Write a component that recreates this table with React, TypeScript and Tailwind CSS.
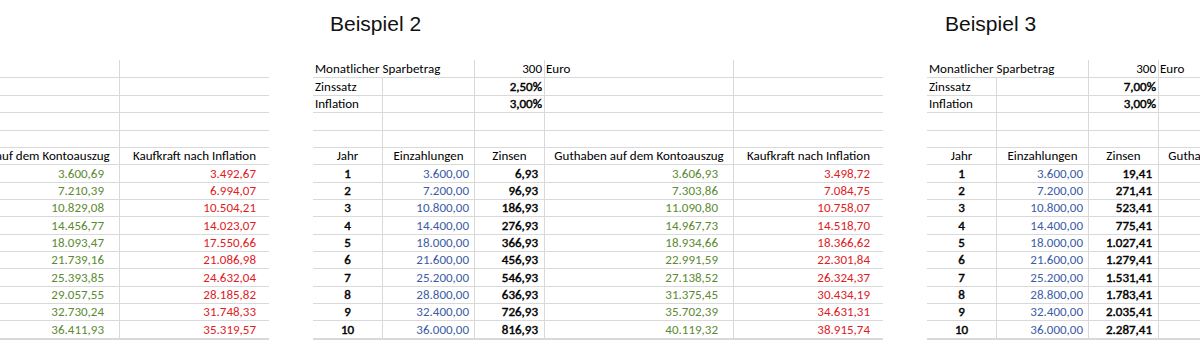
import React from "react";

type Cell = { text?: string; w: string; cls?: string; open?: boolean };

const COLS = ["w-[69px]", "w-[92px]", "w-[70px]", "w-[189px]", "w-[150px]"];

// 16 rows, pixel heights picked so the grid lines fall where Excel drew them
const HEIGHTS = [
  "h-[18px]", "h-[18px]", "h-[17px]", "h-[18px]", "h-[17px]", "h-[17px]",
  "h-[18px]", "h-[17px]", "h-[17px]", "h-[18px]", "h-[17px]", "h-[17px]",
  "h-[18px]", "h-[17px]", "h-[17px]", "h-[19px]",
];

const LEFT = "justify-start pl-[2px]";
const CENTER = "justify-center";
// Excel's bold Calibri reads lighter than the bold face here
const HEAVY = "[-webkit-text-stroke:0.45px_currentColor]";

function fmt(n: number) {
  const [i, d] = n.toFixed(2).split(".");
  return i.replace(/\B(?=(\d{3})+(?!\d))/g, ".") + "," + d;
}

interface Example {
  title: string;
  titleOffset: string;
  rate: string;
  zinsen: number[];
  guthaben: number[];
  kaufkraft: number[];
}

function build(zinsen: number[]) {
  let sum = 0;
  const guthaben = zinsen.map((z) => (sum += 3600 + z));
  return { guthaben, kaufkraft: guthaben.map((g) => g / 1.03093) };
}

const ex3 = build([19.41, 271.41, 523.41, 775.41, 1027.41, 1279.41, 1531.41, 1783.41, 2035.41, 2287.41]);

const examples: Example[] = [
  {
    title: "Beispiel 1",
    titleOffset: "ml-[17px]",
    rate: "0,25%",
    zinsen: [0.69, 10.39, 29.08, 56.77, 93.47, 139.16, 193.85, 257.55, 330.24, 411.93],
    guthaben: [3600.69, 7210.39, 10829.08, 14456.77, 18093.47, 21739.16, 25393.85, 29057.55, 32730.24, 36411.93],
    kaufkraft: [3492.67, 6994.07, 10504.21, 14023.07, 17550.66, 21086.98, 24632.04, 28185.82, 31748.33, 35319.57],
  },
  {
    title: "Beispiel 2",
    titleOffset: "ml-[17px]",
    rate: "2,50%",
    zinsen: [6.93, 96.93, 186.93, 276.93, 366.93, 456.93, 546.93, 636.93, 726.93, 816.93],
    guthaben: [3606.93, 7303.86, 11090.8, 14967.73, 18934.66, 22991.59, 27138.52, 31375.45, 35702.39, 40119.32],
    kaufkraft: [3498.72, 7084.75, 10758.07, 14518.7, 18366.62, 22301.84, 26324.37, 30434.19, 34631.31, 38915.74],
  },
  {
    title: "Beispiel 3",
    titleOffset: "ml-[18px]",
    rate: "7,00%",
    zinsen: [19.41, 271.41, 523.41, 775.41, 1027.41, 1279.41, 1531.41, 1783.41, 2035.41, 2287.41],
    guthaben: ex3.guthaben,
    kaufkraft: ex3.kaufkraft,
  },
];

function Row({ cells, h, last }: { cells: Cell[]; h: string; last?: boolean }) {
  return (
    <div className={`flex ${h} ${last ? "border-b-2" : "border-b"} border-[#d9d9d9]`}>
      {cells.map((c, i) => (
        <div
          key={i}
          className={`${c.w} shrink-0 flex items-end pb-[2px] leading-none whitespace-nowrap ${
            i > 0 && !c.open ? "border-l border-[#d9d9d9]" : ""
          } ${c.cls ?? ""}`}
        >
          {c.text}
        </div>
      ))}
    </div>
  );
}

function Sheet({ ex }: { ex: Example }) {
  const rows: Cell[][] = [
    [
      { text: "Monatlicher Sparbetrag", w: "w-[161px]", cls: LEFT },
      { text: "300", w: COLS[2], cls: "justify-end pr-[2px]" },
      { text: "Euro", w: COLS[3], cls: "justify-start pl-[1px]" },
      { w: COLS[4] },
    ],
    [
      { text: "Zinssatz", w: COLS[0], cls: LEFT },
      { w: COLS[1] },
      { text: ex.rate, w: COLS[2], cls: `justify-end pr-[2px] ${HEAVY}` },
      { w: COLS[3] },
      { w: COLS[4] },
    ],
    [
      { text: "Inflation", w: COLS[0], cls: LEFT },
      { w: COLS[1] },
      { text: "3,00%", w: COLS[2], cls: `justify-end pr-[2px] ${HEAVY}` },
      { w: COLS[3] },
      { w: COLS[4] },
    ],
    COLS.map((w) => ({ w })),
    COLS.map((w) => ({ w })),
    ["Jahr", "Einzahlungen", "Zinsen", "Guthaben auf dem Kontoauszug", "Kaufkraft nach Inflation"].map((t, i) => ({
      text: t,
      w: COLS[i],
      cls: CENTER,
    })),
    ...ex.zinsen.map((z, k) => [
      { text: String(k + 1), w: COLS[0], cls: `${CENTER} ${HEAVY}` },
      { text: fmt(3600 * (k + 1)), w: COLS[1], cls: "justify-end pr-[5px] text-[#3b5ca6]" },
      { text: fmt(z), w: COLS[2], cls: `justify-end pr-[6px] ${HEAVY}` },
      { text: fmt(ex.guthaben[k]), w: COLS[3], cls: "justify-end pr-[15px] text-[#5b8a31]" },
      { text: fmt(ex.kaufkraft[k]), w: COLS[4], cls: "justify-end pr-[13px] text-[#e0201e]" },
    ]),
  ];

  return (
    <div className="w-[570px] shrink-0 flex flex-col">
      <div className="h-[60px] pt-[13px]">
        <div className={`${ex.titleOffset} text-[21px] leading-none text-[#111] font-['Liberation_Sans',Arial,sans-serif]`}>
          {ex.title}
        </div>
      </div>
      <div className="text-[13px] text-black font-['Carlito','Lato',sans-serif]">
        {rows.map((cells, i) => (
          <Row key={i} cells={cells} h={HEIGHTS[i]} last={i === rows.length - 1} />
        ))}
      </div>
    </div>
  );
}

export default function App() {
  return (
    <div className="w-[1200px] h-[359px] overflow-hidden bg-white">
      <div className="flex gap-[44px] -ml-[301px]">
        {examples.map((ex) => (
          <Sheet key={ex.title} ex={ex} />
        ))}
      </div>
    </div>
  );
}
